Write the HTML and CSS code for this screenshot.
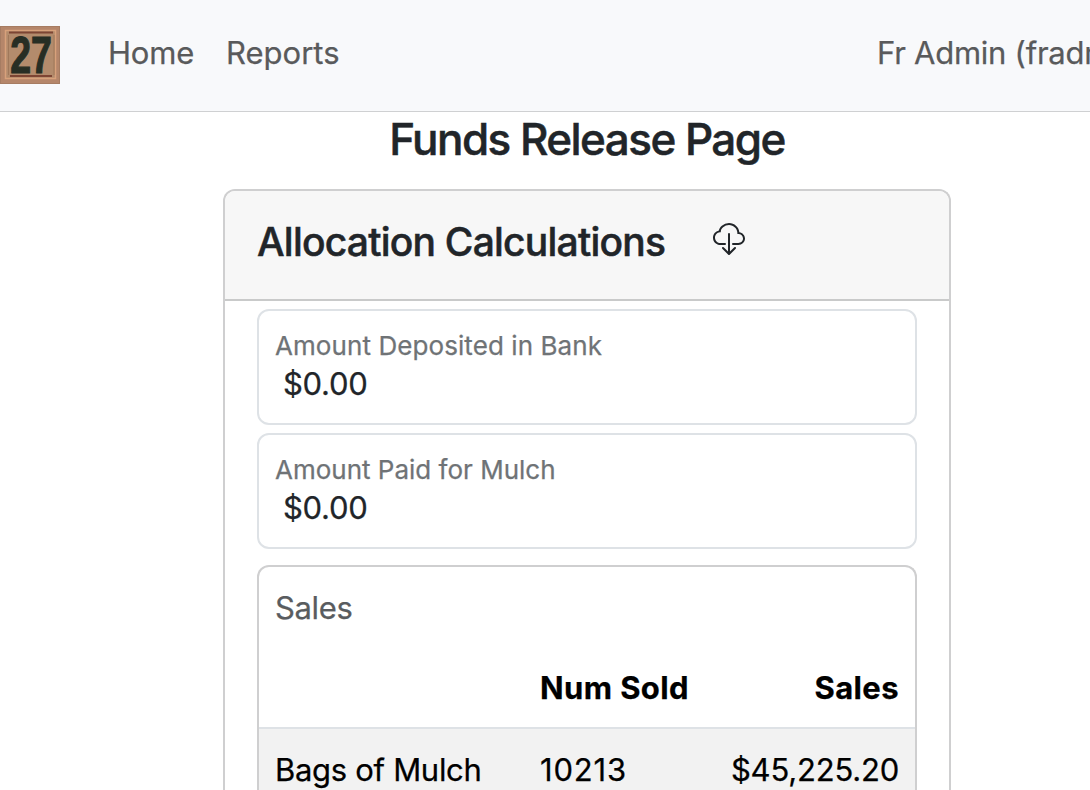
FILE: index.html
```html
<!DOCTYPE html>
<html lang="en">
<head>
<meta charset="utf-8">
<title>Funds Release Page</title>
<link rel="stylesheet" href="styles.css">
</head>
<body>
<nav class="navbar">
  <svg class="brand" viewBox="0 0 60 58" width="60" height="58" aria-label="27">
    <rect width="60" height="58" fill="#b5866a"/>
    <rect x=".5" y=".5" width="59" height="57" fill="none" stroke="#a67c62"/>
    <rect x="5.5" y="4.5" width="50" height="48" fill="#b38b6c" stroke="#d8a17b" stroke-width="1.5"/>
    <path d="M9 6.5H53M10 50H52" stroke="#7d4533" stroke-width="2.2"/>
    <path d="M8.5 9V49M54 9V49" stroke="#a0785b" stroke-width="1"/>
    <text class="brand-number" transform="translate(10.3 47) scale(.72 1)">27</text>
  </svg>
  <a class="nav-link home">Home</a>
  <a class="nav-link reports">Reports</a>
  <span class="nav-link user">Fr Admin (fradmin)</span>
</nav>
<main class="page">
  <h1 class="title">Funds Release Page</h1>
  <section class="card">
    <header class="card-header">
      <h2 class="heading">Allocation Calculations</h2>
      <svg class="icon" viewBox="0 0 16 16" fill="currentColor">
        <path d="M4.406 1.342A5.53 5.53 0 0 1 8 0c2.69 0 4.923 2 5.166 4.579C14.758 4.804 16 6.137 16 7.773 16 9.569 14.502 11 12.687 11H10a.5.5 0 0 1 0-1h2.688C13.979 10 15 8.988 15 7.773c0-1.216-1.02-2.228-2.313-2.228h-.5v-.5C12.188 2.825 10.328 1 8 1a4.53 4.53 0 0 0-2.941 1.1c-.757.652-1.153 1.438-1.153 2.055v.448l-.445.049C2.064 4.805 1 5.952 1 7.318 1 8.785 2.23 10 3.781 10H6a.5.5 0 0 1 0 1H3.781C1.708 11 0 9.366 0 7.318c0-1.763 1.266-3.223 2.942-3.593.143-.863.698-1.723 1.464-2.383z"/>
        <path d="M7.646 15.854a.5.5 0 0 0 .708 0l3-3a.5.5 0 0 0-.708-.708L8.5 14.293V5.5a.5.5 0 0 0-1 0v8.793l-2.146-2.147a.5.5 0 0 0-.708.708l3 3z"/>
      </svg>
    </header>
    <div class="card-body">
      <div class="field">
        <span class="label deposited">Amount Deposited in Bank</span>
        <span class="value">$0.00</span>
      </div>
      <div class="field">
        <span class="label paid">Amount Paid for Mulch</span>
        <span class="value">$0.00</span>
      </div>
      <div class="sales">
        <div class="sales-label">Sales</div>
        <div class="row row-head">
          <span></span><span>Num Sold</span><span class="end">Sales</span>
        </div>
        <div class="row row-striped">
          <span class="bags">Bags of Mulch</span><span class="count">10213</span><span class="amount end">$45,225.20</span>
        </div>
      </div>
    </div>
  </section>
</main>
</body>
</html>
```
FILE: styles.css
```css
* { box-sizing: border-box; }
html { height: 100%; overflow: hidden; }
body {
  margin: 0;
  height: 790px;
  overflow: hidden;
  background: #fff;
  color: #212529;
  font: 400 31px/48px Inter, "Liberation Sans", sans-serif;
  -webkit-text-stroke: .25px;
}
.navbar {
  display: flex;
  height: 112px;
  padding-top: 26px;
  background: #f8f9fb;
  border-bottom: 1px solid #cfd0d2;
  overflow: hidden;
}
.brand { flex: none; }
.brand-number { font: 700 52px "Liberation Sans", sans-serif; fill: #272e24; stroke: #272e24; stroke-width: 1.2px; }
.nav-link { margin-top: 3px; color: #595a5b; white-space: nowrap; }
.home { width: 86px; margin-left: 48px; letter-spacing: -.2px; }
.reports { margin-left: 32px; letter-spacing: 0; width: 113px; }
.user { margin-left: 538px; flex: none; letter-spacing: -.25px; }
.page { width: 728px; height: 678px; margin-left: 223px; overflow: hidden; }
.title { margin: 0; padding-top: 1px; height: 77px; text-align: center; font-weight: 500; font-size: 44px; line-height: 52px; letter-spacing: -1.55px; white-space: nowrap; -webkit-text-stroke: .5px; }
.card { height: 601px; border: 2px solid #cfcfd0; border-bottom: 0; border-radius: 12px 12px 0 0; overflow: hidden; }
.card-header { display: flex; height: 110px; padding: 27px 32px 0; background: #f7f7f7; border-bottom: 2px solid #c9caca; }
.heading { margin: 0; width: 408px; font-weight: 500; font-size: 39px; line-height: 48px; letter-spacing: -.78px; white-space: nowrap; -webkit-text-stroke: .5px; }
.icon { width: 32px; height: 32px; margin: 5px 0 0 48px; }
.card-body { padding: 8px 32px 0; }
.field { display: flex; flex-direction: column; height: 116px; margin-bottom: 8px; padding: 15px 16px 0; border: 2px solid #dee2e6; border-radius: 12px; }
.label { color: #6f7376; font-size: 26px; line-height: 40px; height: 34px; white-space: nowrap; }
.deposited { letter-spacing: .08px; }
.value { padding-left: 8px; letter-spacing: -.3px; }
.sales { height: 225px; margin-top: 16px; border: 2px solid #cfcfd0; border-bottom: 0; border-radius: 12px 12px 0 0; overflow: hidden; }
.sales-label { padding: 17px 16px 0; color: #595c5f; height: 81px; letter-spacing: -.35px; }
.row { display: grid; grid-template-columns: 265px 180px 1fr; height: 81px; padding: 16px 16px 0; color: #000; white-space: nowrap; }
.row-head { font-weight: 700; border-bottom: 2px solid #dee2e6; letter-spacing: .4px; }
.row-striped { padding-top: 17px; background: #f2f2f2; }
.bags { letter-spacing: -.3px; }
.count { letter-spacing: .8px; }
.amount { letter-spacing: -.2px; }
.end { text-align: right; }
```
